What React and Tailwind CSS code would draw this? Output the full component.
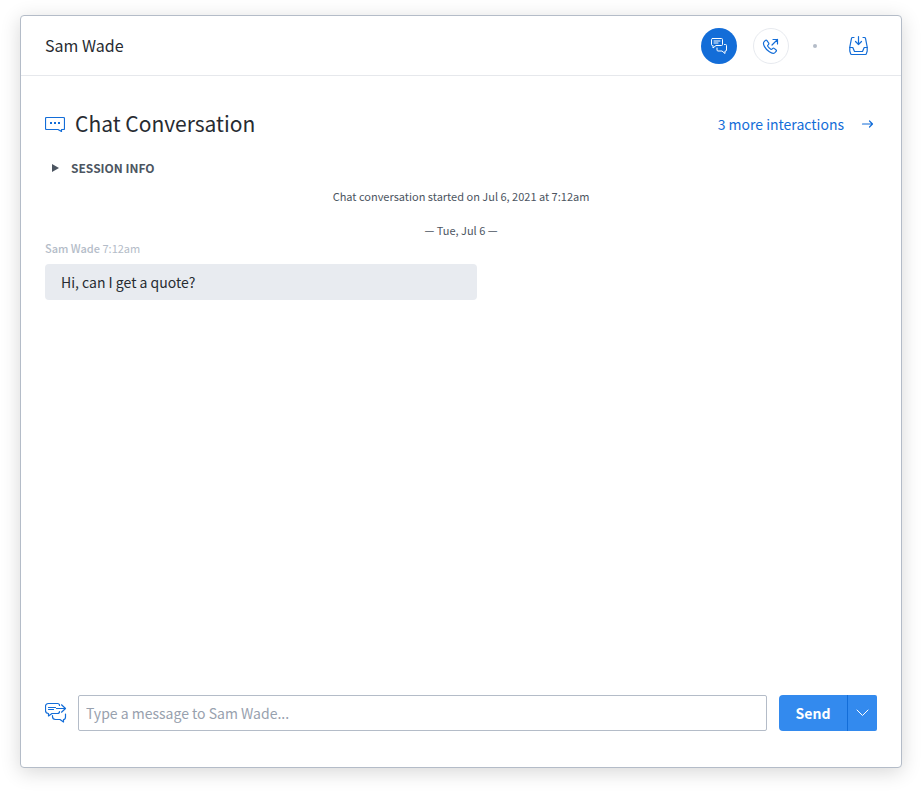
import React, { useState } from "react";

const iconProps = {
    fill: "none",
    stroke: "currentColor",
    strokeLinecap: "round",
    strokeLinejoin: "round",
    "aria-hidden": true,
};

const ChatsIcon = () => (
    <svg {...iconProps} width="18" height="18" viewBox="0 0 18 18">
        <path d="M2.5 1.5h9a1 1 0 0 1 1 1v5a1 1 0 0 1-1 1H6L3 11V8.500h-.5a1 1 0 0 1-1-1v-5a1 1 0 0 1 1-1z" />
        <path d="M4 4h6M4 6h4" />
        <path d="M14.5 7.5h1a1 1 0 0 1 1 1V13a1 1 0 0 1-1 1H15v2.500L12 14H8a1 1 0 0 1-1-1v-2" />
    </svg>
);

const PhoneIcon = () => (
    <svg {...iconProps} width="18" height="18" viewBox="0 0 18 18" strokeWidth="1.2">
        <path d="M3.400 3.400 2.200 4.600c-1 1-.9 2.800.3 5 1.100 2 2.900 3.900 4.900 5.200 2.200 1.500 4.300 1.900 5.500.8l1.200-1.200c.4-.4.4-1 0-1.400l-1.900-1.600c-.4-.4-1-.4-1.400 0l-.8.8c-.3.3-.8.3-1.200.1-1.200-.8-2.300-1.900-3-3-.2-.4-.2-.8.1-1.100l.7-.8c.4-.4.4-1 0-1.400L4.800 3.400c-.4-.4-1-.4-1.400 0z" />
        <path d="M10 8l5.500-5.500M11 2.500h4.500V7" />
    </svg>
);

const InboxIcon = () => (
    <svg {...iconProps} width="20" height="20" viewBox="0 0 20 20" strokeWidth="1.200">
        <path d="M5 1.500H3.500a1 1 0 0 0-1 .8L.8 11v4l.8 2.700a1 1 0 0 0 1 .8h13.800a1 1 0 0 0 1-.8l.8-2.700v-4l-1.700-8.700a1 1 0 0 0-1-.8H14" />
        <path d="M.8 11.500h3l1.700 4h8l1.700-4h3M9.500.6v8M6.500 5.500l3 3 3-3" />
    </svg>
);

const BubbleIcon = () => (
    <svg {...iconProps} width="20" height="16" viewBox="0 0 20 16" strokeWidth="1.200">
        <path d="M1.500 1.500h17a1 1 0 0 1 1 1v10a1 1 0 0 1-1 1h-2V15.500L13 13.500H1.500a1 1 0 0 1-1-1v-10a1 1 0 0 1 1-1z" />
        <path d="M5 7h2M9 7h2M13 7h2" strokeWidth="2" strokeLinecap="butt" />
    </svg>
);

const ReplyIcon = () => (
    <svg {...iconProps} width="22" height="22" viewBox="0 0 22 22" strokeWidth="1.200">
        <path d="M14.500 3.500c0-1.200-.7-2-2-2h-9c-2 0-3 1.200-3 3v4c0 1.800 1 3 3 3V14l3.500-2.500h5.500c1.200 0 2-.7 2-2" />
        <path d="M3.500 5.500h7M3.500 7.500h5M11.500 6.500h9M16.500 2.800l4 3.700-4 3.700" />
        <path d="M7.500 13.500v1c0 1.800 1 3 3 3H15l3.500 2.500v-2.500c1.300 0 2-.8 2-2.500v-3" />
    </svg>
);

const App = () => {
    const [message, setMessage] = useState("");

    return (
        <div className="min-h-screen bg-white px-5 pt-[15px] pb-[25px] flex flex-col font-['Noto_Sans_CJK_SC',sans-serif] text-[#272b31]">
            <main className="flex-1 flex flex-col bg-white border border-[#b4bcc8] rounded-[4px] shadow-[0_4px_20px_rgba(0,0,0,0.16)]">
                {/* Contact header */}
                <header className="h-[60px] flex items-center justify-between px-6 border-b border-[#e6e8ec]">
                    <h1 className="text-base pb-[2px]">Sam Wade</h1>
                    <div className="flex items-center text-[#136dd8]">
                        <button aria-label="Chat" className="size-9 rounded-full bg-[#136dd8] text-white flex items-center justify-center">
                            <ChatsIcon />
                        </button>
                        <button aria-label="Call" className="size-9 ml-4 rounded-full border border-[#e7eaef] flex items-center justify-center">
                            <PhoneIcon />
                        </button>
                        <span className="size-1 mx-6 rounded-full bg-[#b4bcc8]" />
                        <button aria-label="Move to inbox" className="size-9 flex items-center justify-center">
                            <InboxIcon />
                        </button>
                    </div>
                </header>

                {/* Conversation */}
                <section className="flex-1 px-6 pt-8">
                    <div className="h-8 flex items-center justify-between">
                        <div className="flex items-center gap-[10px]">
                            <span className="text-[#136dd8]">
                                <BubbleIcon />
                            </span>
                            <h2 className="text-[21px] leading-8 pb-[2px]">Chat Conversation</h2>
                        </div>
                        <a href="#interactions" className="flex items-center gap-4 pr-px text-sm text-[#136dd8]">
                            3 more interactions
                            <svg {...iconProps} width="16" height="12" viewBox="0 0 16 12" strokeWidth="1.200">
                                <path d="M2.500 6h10M9.500 3l3 3-3 3" />
                            </svg>
                        </a>
                    </div>

                    <details className="mt-[18px] text-[#4c5561]">
                        <summary className="h-5 pl-[7px] flex items-center gap-3 text-xs font-bold cursor-pointer">
                            <svg width="7" height="8" viewBox="0 0 7 8" fill="currentColor" aria-hidden="true">
                                <path d="M0 0l7 4-7 4z" />
                            </svg>
                            SESSION INFO
                        </summary>
                        <p className="py-2 pl-[26px] text-xs">Sam Wade</p>
                    </details>

                    <p className="mt-[10px] text-center text-[11px] leading-4 text-[#4c5561]">
                        Chat conversation started on Jul 6, 2021 at 7:12am
                    </p>
                    <p className="mt-[18px] text-center text-[11px] leading-4 text-[#4c5561]">— Tue, Jul 6 —</p>

                    <p className="mt-[2px] text-[11px] leading-4 text-[#b4bcc8]">
                        <b className="font-medium">Sam Wade</b> 7:12am
                    </p>
                    <div className="mt-2 w-[432px] max-w-full h-9 px-4 flex items-center rounded-[4px] bg-[#e8ebf0] text-sm">
                        Hi, can I get a quote?
                    </div>
                </section>

                {/* Composer */}
                <form className="px-6 pb-9 flex items-center" onSubmit={(e) => e.preventDefault()}>
                    <span className="text-[#136dd8]">
                        <ReplyIcon />
                    </span>
                    <input
                        type="text"
                        aria-label="Message"
                        placeholder="Type a message to Sam Wade..."
                        value={message}
                        onChange={(e) => setMessage(e.target.value)}
                        className="flex-1 min-w-0 h-9 ml-[11px] mr-3 px-[7px] border border-[#b4bcc8] rounded-[2px] text-sm placeholder:text-[#98a1ae]"
                    />
                    <button type="submit" className="w-[68px] h-9 rounded-l-[4px] bg-[#338aee] text-white text-sm font-bold">
                        Send
                    </button>
                    <button type="button" aria-label="More send options" className="w-[30px] h-9 flex items-center justify-center rounded-r-[2px] border-l border-[#136dd8] bg-[#338aee] text-white">
                        <svg {...iconProps} width="13" height="8" viewBox="0 0 13 8">
                            <path d="M1 1l5.500 5.500L12 1" />
                        </svg>
                    </button>
                </form>
            </main>
        </div>
    );
};

export default App;
